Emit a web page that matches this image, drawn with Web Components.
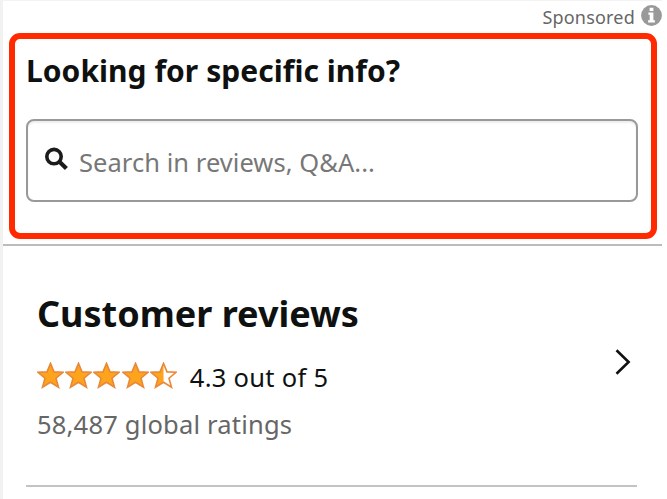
<!DOCTYPE html>
<html lang="en">
<head>
<meta charset="utf-8">
<title>Customer reviews</title>
<style>
  body {
    margin: 0;
    background: #fff;
    font-family: "Noto Sans", "Open Sans", sans-serif;
    color: #0f1111;
  }
</style>
</head>
<body>
<review-page>
  <sponsored-label slot="top">Sponsored</sponsored-label>
  <info-search slot="search" placeholder="Search in reviews, Q&amp;A...">Looking for specific info?</info-search>
  <review-summary slot="summary">
    <span slot="title">Customer reviews</span>
    <star-rating slot="stars" value="4.5"></star-rating>
    <span slot="score">4.3 out of 5</span>
    <span slot="count">58,487 global ratings</span>
  </review-summary>
</review-page>

<script>
class ReviewPage extends HTMLElement {
  connectedCallback() {
    this.attachShadow({ mode: 'open' });
    this.shadowRoot.innerHTML = `
      <style>
        :host {
          display: block;
          box-sizing: border-box;
          width: 662px;
          height: 499px;
          overflow: hidden;
          border-left: 3px solid #f2f2f2;
          border-top: 1px solid #f3f3f3;
        }
        .divider {
          height: 2px;
          margin-top: 5px;
          background: #bcbcbc;
        }
      </style>
      <slot name="top"></slot>
      <slot name="search"></slot>
      <div class="divider"></div>
      <slot name="summary"></slot>
    `;
  }
}

class SponsoredLabel extends HTMLElement {
  connectedCallback() {
    this.attachShadow({ mode: 'open' });
    this.shadowRoot.innerHTML = `
      <style>
        :host {
          display: flex;
          justify-content: flex-end;
          gap: 6px;
          height: 32px;
          font-size: 18px;
          line-height: 32px;
          letter-spacing: 0.2px;
          color: #666;
        }
        svg {
          width: 21px;
          height: 21px;
          margin-top: 4px;
        }
      </style>
      <span><slot></slot></span>
      <svg viewBox="0 0 21 21">
        <circle cx="10.5" cy="10.5" r="10.4" fill="#999"/>
        <path d="M8.6 2.8h3.8v3.2H8.6zM7.4 7.6h5v7.6h1.5v2.2H7.1v-2.2h1.6V9.8H7.4z" fill="#fff"/>
      </svg>
    `;
  }
}

class InfoSearch extends HTMLElement {
  connectedCallback() {
    this.attachShadow({ mode: 'open' });
    this.shadowRoot.innerHTML = `
      <style>
        :host {
          display: block;
          box-sizing: border-box;
          width: 648px;
          height: 206px;
          margin-left: 6px;
          padding: 12px 13px 0 11px;
          border: 6px solid #ff2a00;
          border-radius: 11px;
        }
        h2 {
          margin: 0;
          font-size: 30px;
          line-height: 40px;
          font-weight: 700;
          white-space: nowrap;
          letter-spacing: 0.04px;
        }
        .field {
          display: flex;
          align-items: center;
          box-sizing: border-box;
          height: 83px;
          margin-top: 28px;
          padding-left: 17px;
          border: 2px solid #999;
          border-radius: 8px;
          box-shadow: inset 0 2px 2px #eee;
        }
        svg {
          width: 24px;
          height: 24px;
          margin-bottom: 4px;
        }
        .placeholder {
          margin: 3px 0 0 10px;
          font-size: 25.5px;
          line-height: 36px;
          letter-spacing: 0.05px;
          color: #777;
          white-space: nowrap;
        }
      </style>
      <h2><slot></slot></h2>
      <div class="field">
        <svg viewBox="0 0 24 24" fill="none" stroke="#1b1b1b">
          <circle cx="9" cy="9.6" r="7.2" stroke-width="3.6"/>
          <path d="M14.2 14.6l7.2 7" stroke-width="4.2"/>
        </svg>
        <span class="placeholder"></span>
      </div>
    `;
    this.shadowRoot.querySelector('.placeholder').textContent = this.getAttribute('placeholder');
  }
}

class StarRating extends HTMLElement {
  connectedCallback() {
    const value = Number(this.getAttribute('value'));
    const star = 'M13.5 1.4L17 9.9l9 .4-7 5.9 2.5 9-8-4.9-8 4.9 2.5-9-7-5.9 9-.4z';
    let stars = '';
    for (let i = 0; i < 5; i++) {
      const part = Math.max(0, Math.min(1, value - i));
      stars += `
        <svg viewBox="0 0 27 27">
          <clipPath id="fill${i}"><rect width="${27 * part}" height="27"/></clipPath>
          <path d="${star}" fill="#fff"/>
          <path d="${star}" fill="#fea41c" clip-path="url(#fill${i})"/>
          <path d="${star}" fill="none" stroke="#e8893a" stroke-width="1.6"/>
        </svg>`;
    }
    this.attachShadow({ mode: 'open' });
    this.shadowRoot.innerHTML = `
      <style>
        :host {
          display: flex;
          gap: 1.2px;
        }
        svg {
          width: 27px;
          height: 27px;
        }
      </style>
      ${stars}
    `;
  }
}

class ReviewSummary extends HTMLElement {
  connectedCallback() {
    this.attachShadow({ mode: 'open' });
    this.shadowRoot.innerHTML = `
      <style>
        :host {
          display: block;
          width: 611px;
          margin-left: 23px;
          border-bottom: 2px solid #c2c4c4;
        }
        .row {
          display: flex;
          justify-content: space-between;
          box-sizing: border-box;
          height: 239px;
          padding: 43px 6px 0 11px;
          white-space: nowrap;
        }
        h1 {
          margin: 0;
          font-size: 36px;
          line-height: 50px;
          font-weight: 700;
        }
        .rating {
          display: flex;
          align-items: flex-start;
          gap: 13px;
          height: 47px;
          margin-top: 20px;
        }
        .score {
          font-size: 25.5px;
          line-height: 36px;
          letter-spacing: 0.3px;
        }
        .rating ::slotted(star-rating) {
          margin-top: 3px;
        }
        .count {
          font-size: 25.5px;
          line-height: 36px;
          letter-spacing: 0.2px;
          color: #666;
        }
        .arrow {
          width: 16px;
          height: 28px;
          margin-top: 59px;
        }
      </style>
      <div class="row">
        <div>
          <h1><slot name="title"></slot></h1>
          <div class="rating">
            <slot name="stars"></slot>
            <div class="score"><slot name="score"></slot></div>
          </div>
          <div class="count"><slot name="count"></slot></div>
        </div>
        <svg class="arrow" viewBox="0 0 16 28" fill="none" stroke="#111" stroke-width="2.6">
          <path d="M1.5 2.3L13.6 14 1.5 25.7"/>
        </svg>
      </div>
    `;
  }
}

customElements.define('review-page', ReviewPage);
customElements.define('sponsored-label', SponsoredLabel);
customElements.define('info-search', InfoSearch);
customElements.define('star-rating', StarRating);
customElements.define('review-summary', ReviewSummary);
</script>
</body>
</html>
